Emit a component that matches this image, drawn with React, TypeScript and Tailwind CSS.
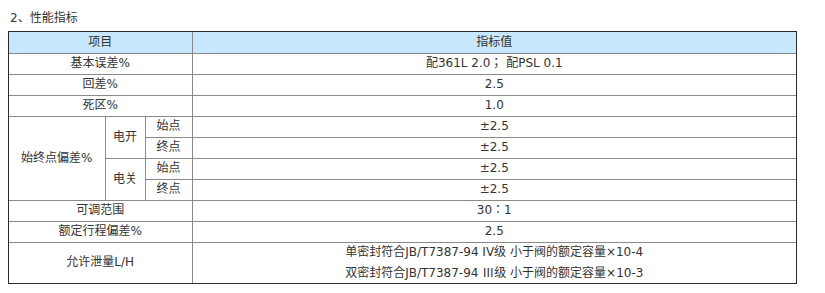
import React from "react";

const cell = "border border-[#8a8a8a] text-center align-middle h-[21px] p-0 leading-[19px]";

const rows: [string, string][] = [
  ["基本误差%", "配361L 2.0； 配PSL 0.1"],
  ["回差%", "2.5"],
  ["死区%", "1.0"],
];

const App: React.FC = () => {
  return (
    <div
      className="bg-white w-[825px] h-[293px] pl-[8px] pt-[10px] text-[12px] text-[#333]"
      style={{ fontFamily: '"DejaVu Sans", "Noto Sans CJK JP", "Noto Sans CJK SC", sans-serif' }}
    >
      <div className="pl-[2px] leading-[16px] h-[21px]">2、性能指标</div>
      <div className="w-[789px] border border-[#2b2b2b]">
        <table className="w-full border-collapse border-hidden table-fixed">
          <colgroup>
            <col className="w-[96px]" />
            <col className="w-[40px]" />
            <col className="w-[47px]" />
            <col />
          </colgroup>
          <tbody>
            <tr className="bg-[#c6e7fc]">
              <td colSpan={3} className={cell}>项目</td>
              <td className={cell}>指标值</td>
            </tr>
            {rows.map(([k, v]) => (
              <tr key={k}>
                <td colSpan={3} className={cell}>{k}</td>
                <td className={cell}>{v}</td>
              </tr>
            ))}
            <tr>
              <td rowSpan={4} className={cell}>始终点偏差%</td>
              <td rowSpan={2} className={cell}>电开</td>
              <td className={cell}>始点</td>
              <td className={cell}>±2.5</td>
            </tr>
            <tr>
              <td className={cell}>终点</td>
              <td className={cell}>±2.5</td>
            </tr>
            <tr>
              <td rowSpan={2} className={cell}>电关</td>
              <td className={cell}>始点</td>
              <td className={cell}>±2.5</td>
            </tr>
            <tr>
              <td className={cell}>终点</td>
              <td className={cell}>±2.5</td>
            </tr>
            <tr>
              <td colSpan={3} className={cell}>可调范围</td>
              <td className={cell}>30：1</td>
            </tr>
            <tr>
              <td colSpan={3} className={cell}>额定行程偏差%</td>
              <td className={cell}>2.5</td>
            </tr>
            <tr>
              <td colSpan={3} className={`${cell} h-[39px]`}>允许泄量L/H</td>
              <td className={`${cell} h-[39px]`}>
                <div>单密封符合JB/T7387-94 IV级 小于阀的额定容量×10-4</div>
                <div>
                  双密封符合JB/T7387-94{" "}
                  <span className="font-['Noto_Sans_CJK_JP',sans-serif]">Ⅲ</span>级 小于阀的额定容量×10-3
                </div>
              </td>
            </tr>
          </tbody>
        </table>
      </div>
    </div>
  );
};

export default App;
